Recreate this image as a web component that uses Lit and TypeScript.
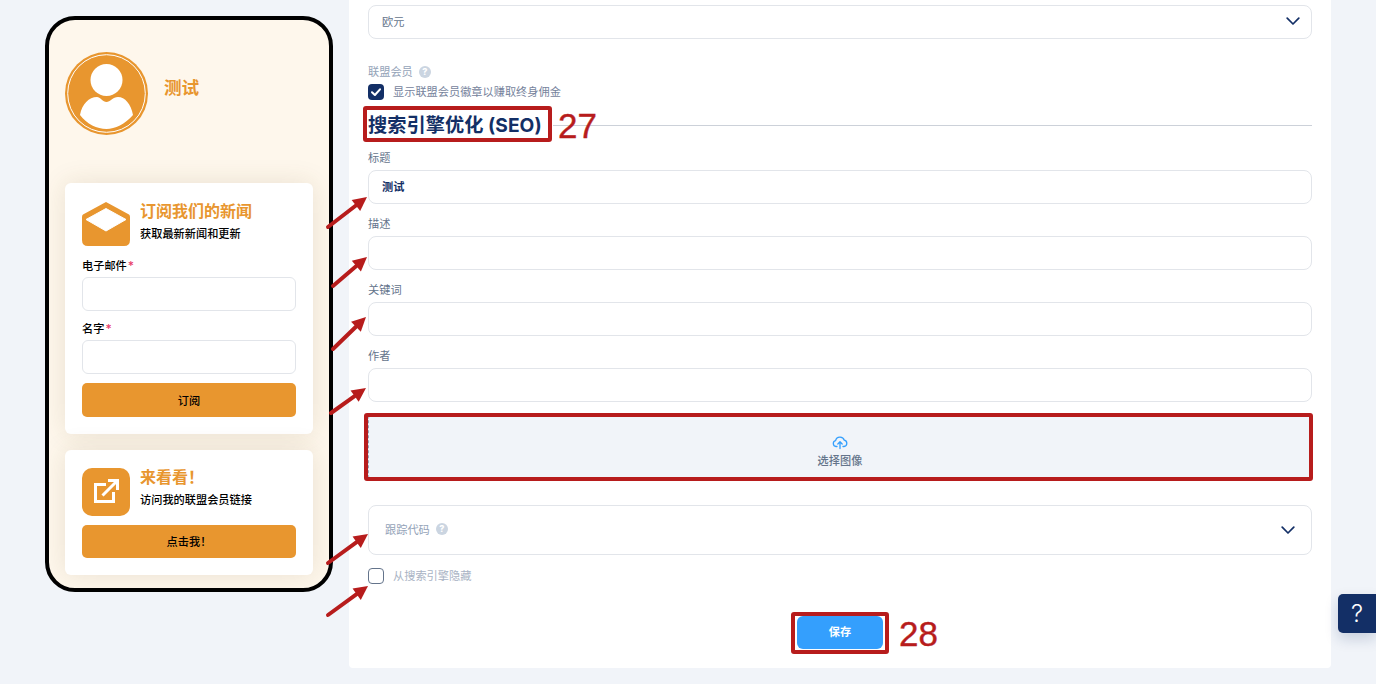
import { LitElement, html, css, svg } from "lit";
import { customElement } from "lit/decorators.js";

const chevron = html`<svg class="chev" width="14" height="14" viewBox="0 0 14 14"><path d="M1.2 4.2 7 10l5.8-5.8" fill="none" stroke="#132f66" stroke-width="1.7" stroke-linecap="round" stroke-linejoin="round"/></svg>`;
const help = html`<span class="help">?</span>`;

const arrows = [
  [328, 227, 367, 197],
  [333, 286, 367, 257],
  [333, 349, 366, 317],
  [331, 413, 366, 388],
  [328, 563, 368, 534],
  [328, 615, 368, 586],
];

function arrow([x1, y1, x2, y2]: number[]) {
  const a = Math.atan2(y2 - y1, x2 - x1);
  const l = 14, w = 7;
  const bx = x2 - l * Math.cos(a), by = y2 - l * Math.sin(a);
  const px = -Math.sin(a) * w, py = Math.cos(a) * w;
  return svg`<line x1=${x1} y1=${y1} x2=${bx} y2=${by} stroke="#b71c1c" stroke-width="4" stroke-linecap="round"/>
    <polygon points="${x2},${y2} ${bx + px},${by + py} ${bx - px},${by - py}" fill="#b71c1c"/>`;
}

@customElement("app-root")
export class AppRoot extends LitElement {
  static styles = css`
    :host {
      display: block;
      position: relative;
      width: 1376px;
      height: 684px;
      overflow: hidden;
      background: #f1f4f9;
      font-family: Inter, "Noto Sans CJK SC", "Noto Sans", sans-serif;
    }
    * { box-sizing: border-box; }
    .page { display: flex; align-items: flex-start; padding-left: 45px; gap: 16px; }

    .phone {
      width: 288px; height: 576px; margin-top: 16px;
      border: 4px solid #000; border-radius: 30px;
      background: #fef7ec; overflow: hidden;
      padding: 32px 16px 0;
      display: flex; flex-direction: column;
    }
    .profile { display: flex; gap: 16px; height: 131px; }
    .avatar { width: 83px; height: 83px; flex: none; display: block; }
    .pname { font-size: 17.6px; font-weight: 700; color: #e8962f; margin-top: 25px; line-height: 22px; }
    .card {
      background: #fff; border-radius: 6px; padding: 19px 17px 17px;
      box-shadow: 0 0 26px rgba(100, 80, 30, 0.13);
    }
    .card + .card { margin-top: 16px; padding-top: 18px; }
    .chead { display: flex; gap: 10px; }
    .chead svg { flex: none; display: block; }
    .ctitle { font-size: 16px; font-weight: 700; color: #e8962f; line-height: 20px; margin-top: -1px; }
    .csub { font-size: 11.2px; font-weight: 500; color: #000; line-height: 16px; margin-top: 5px; }
    .flabel { font-size: 11.2px; font-weight: 500; color: #000; line-height: 16px; margin-bottom: 3px; }
    .flabel b { color: #e8406c; font-weight: 500; font-size: 12px; line-height: 10px; margin-left: 1px; }
    .pinput { height: 34px; border: 1px solid #e2e5ea; border-radius: 6px; background: #fff; }
    .cbtn {
      display: block; width: 100%; height: 34px; border: 0; border-radius: 5px;
      background: #e8962f; color: #000; font: inherit; font-size: 11.2px; font-weight: 500; padding: 0 0 1px;
    }

    .panel {
      width: 982px; height: 668px; background: #fff; border-radius: 0 0 4px 4px;
      padding: 5px 19px 0;
      display: flex; flex-direction: column;
    }
    .select {
      height: 34px; border: 1px solid #e2e5ea; border-radius: 8px; padding: 0 11px 2px 13px;
      display: flex; align-items: center; justify-content: space-between;
      font-size: 11.2px; color: #64748b;
    }
    .chev { display: block; }
    .mlabel { font-size: 11.2px; color: #94a3b8; line-height: 16px; display: flex; align-items: center; gap: 6px; margin-top: 25px; }
    .help {
      width: 12px; height: 12px; border-radius: 50%; background: #cbd5e1; color: #fff;
      font-size: 9px; font-weight: 800; line-height: 12px; text-align: center; display: inline-block;
    }
    .check { display: flex; align-items: center; gap: 9px; font-size: 11.2px; line-height: 16px; color: #76839c; margin-top: 4px; }
    .box { width: 16px; height: 16px; border-radius: 4px; flex: none; display: block; }
    .box.on { background: #132f66; }
    .box.off { border: 1.5px solid #64748b; }
    .section { display: flex; align-items: center; height: 36px; margin-top: 6px; gap: 11px; }
    .section h2 { margin: 0; padding-top: 1px; font-size: 19.2px; line-height: 36px; font-weight: 700; color: #132f66; white-space: nowrap; letter-spacing: 0.05px; }
    .section i { flex: 1; height: 1px; background: #ccd1d9; margin-top: 3px; }
    .fields { display: flex; flex-direction: column; gap: 12px; margin-top: 8px; }
    .label { font-size: 11.2px; line-height: 16px; color: #64748b; margin-bottom: 4px; }
    .input {
      height: 34px; border: 1px solid #e2e5ea; border-radius: 8px; padding: 0 13px 2px;
      display: flex; align-items: center; font-size: 11.2px; font-weight: 700; color: #132f66;
    }
    .upload {
      height: 64px; margin-top: 13px; background: #f1f4f9; border: 1px dashed #94a3b8; border-radius: 4px;
      display: flex; flex-direction: column; align-items: center; justify-content: center;
      font-size: 11.2px; font-weight: 500; color: #64748b; line-height: 16px; padding-top: 9px;
    }
    .upload svg { display: block; margin-bottom: 3px; }
    .track {
      height: 50px; margin-top: 26px; border: 1px solid #e2e5ea; border-radius: 8px; padding: 0 16px;
      display: flex; align-items: center; justify-content: space-between; font-size: 11.2px; color: #94a3b8;
    }
    .track span.t { display: flex; align-items: center; gap: 6px; margin-top: -2px; }
    .check.hide { margin-top: 13px; color: #a9b3c4; }
    .save {
      align-self: center; width: 86px; height: 33px; margin-top: 32px; border: 0; border-radius: 6px;
      background: #349ffd; color: #fff; font: inherit; font-size: 11.2px; font-weight: 700; padding: 0 0 3px;
    }
    .helpbtn {
      position: absolute; left: 1338px; top: 594px; width: 38px; height: 39px;
      background: #132f66; color: #fff; border-radius: 5px 0 0 5px;
      font-family: Inter, sans-serif; font-size: 24px; font-weight: 300; line-height: 40px; text-align: center;
      box-shadow: 0 6px 14px rgba(19, 47, 102, 0.18);
    }
    .overlay { position: absolute; left: 0; top: 0; pointer-events: none; }
    .num { font-family: "Liberation Sans", Arial, sans-serif; font-size: 35px; fill: #b71c1c; stroke: #b71c1c; stroke-width: 0.4px; }
  `;

  render() {
    return html`
      <div class="page">
        <div class="phone">
          <div class="profile">
            <svg class="avatar" viewBox="0 0 83 83">
              <circle cx="41.5" cy="41.5" r="41.5" fill="#e8962f"/>
              <circle cx="41.5" cy="41.5" r="38.8" fill="none" stroke="#fff" stroke-width="1"/>
              <circle cx="41.5" cy="28" r="16" fill="#fff"/>
              <path d="M15 63C17 52 24 45 32 45 35 45 38 50 41.5 50 45 50 48 45 53 45 60 45 66 52 68 63 60 72 50 77 41.5 77 32 77 22 72 15 63Z" fill="#fff"/>
            </svg>
            <div class="pname">测试</div>
          </div>
          <div class="card">
            <div class="chead">
              <svg width="48" height="44" viewBox="0 0 48 44">
                <path d="M24 0 47 12.5Q48 13 48 15V38Q48 44 42 44H6Q0 44 0 38V15Q0 13 1 12.5Z" fill="#e8962f"/>
                <path d="M24 6.5 44 17.5 24 29 4 17.5Z" fill="#fff" stroke="#fff" stroke-width="1" stroke-linejoin="round"/>
              </svg>
              <div>
                <div class="ctitle">订阅我们的新闻</div>
                <div class="csub">获取最新新闻和更新</div>
              </div>
            </div>
            <div class="flabel" style="margin-top:12px">电子邮件<b>*</b></div>
            <div class="pinput"></div>
            <div class="flabel" style="margin-top:10px">名字<b>*</b></div>
            <div class="pinput"></div>
            <button class="cbtn" style="margin-top:9px">订阅</button>
          </div>
          <div class="card">
            <div class="chead">
              <svg width="48" height="48" viewBox="0 0 48 48">
                <rect width="48" height="48" rx="10" fill="#e8962f"/>
                <path d="M24 16.5H13.5V33.5H31.5V24M20.5 27.5 35 13M26 12.5H35.5V22" fill="none" stroke="#fff" stroke-width="3"/>
              </svg>
              <div>
                <div class="ctitle">来看看！</div>
                <div class="csub">访问我的联盟会员链接</div>
              </div>
            </div>
            <button class="cbtn" style="margin-top:9px;height:33px">点击我！</button>
          </div>
        </div>

        <div class="panel">
          <div class="select"><span>欧元</span>${chevron}</div>
          <div class="mlabel">联盟会员 ${help}</div>
          <div class="check">
            <svg class="box on" viewBox="0 0 16 16"><path d="M4 8.3 6.9 11 12 5.4" fill="none" stroke="#fff" stroke-width="2.1" stroke-linecap="round" stroke-linejoin="round"/></svg>
            显示联盟会员徽章以赚取终身佣金
          </div>
          <div class="section"><h2>搜索引擎优化 (SEO)</h2><i></i></div>
          <div class="fields">
            <div><div class="label">标题</div><div class="input">测试</div></div>
            <div><div class="label">描述</div><div class="input"></div></div>
            <div><div class="label">关键词</div><div class="input"></div></div>
            <div><div class="label">作者</div><div class="input"></div></div>
          </div>
          <div class="upload">
            <svg width="16" height="16" viewBox="0 0 16 16" fill="none" stroke="#349ffd" stroke-width="1.3" stroke-linecap="round" stroke-linejoin="round">
              <path d="M5 12.5H4A3 3 0 0 1 3.6 6.6 4.5 4.5 0 0 1 12.3 6.2 3.2 3.2 0 0 1 12 12.5H11"/>
              <path d="M8 14.5V8M5.8 10 8 7.8 10.2 10"/>
            </svg>
            选择图像
          </div>
          <div class="track"><span class="t">跟踪代码 ${help}</span>${chevron}</div>
          <div class="check hide"><span class="box off"></span>从搜索引擎隐藏</div>
          <button class="save">保存</button>
        </div>
      </div>

      <div class="helpbtn">?</div>

      <svg class="overlay" width="1376" height="684" viewBox="0 0 1376 684">
        ${arrows.map(arrow)}
        <g fill="none" stroke="#b71c1c" stroke-width="4">
          <rect x="365" y="108" width="185" height="32" rx="1"/>
          <rect x="366" y="415" width="945" height="64" rx="1"/>
          <rect x="793" y="614" width="94" height="38" rx="1"/>
        </g>
        <text class="num" x="558" y="138">27</text>
        <text class="num" x="899" y="646">28</text>
      </svg>
    `;
  }
}
